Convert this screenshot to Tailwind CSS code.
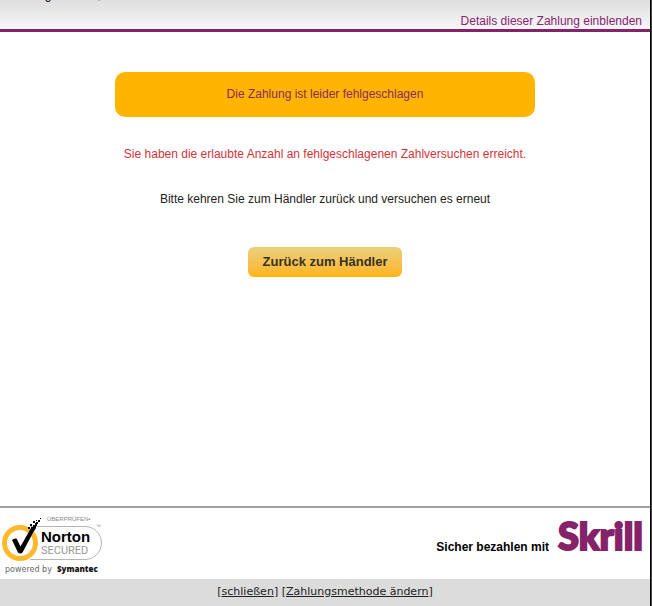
<!DOCTYPE html>
<html lang="de">
<head>
    <meta charset="UTF-8">
    <meta name="viewport" content="width=device-width, initial-scale=1.0">
    <title>Zahlung fehlgeschlagen</title>
    <script src="https://cdn.jsdelivr.net/npm/@tailwindcss/browser@4"></script>
</head>
<body class="bg-[#444444] pr-px">
    <div class="flex min-h-screen flex-col border-r border-black bg-white font-['Liberation_Sans',Arial,sans-serif] text-[12px] leading-4 text-[#222222]">
        <header class="flex h-8 items-end justify-between overflow-hidden border-b-3 border-[#85226a] bg-linear-to-b from-[#dfdfdf] to-[#f7f7f7] px-2">
            <p class="self-start -mt-[13px] text-black">Zahlung für Euro,</p>
            <a href="#" class="text-[#8c2372]">Details dieser Zahlung einblenden</a>
        </header>

        <main class="flex flex-1 flex-col items-center pt-10">
            <p class="w-[420px] max-w-full rounded-[10px] bg-[#ffb400] pt-3.5 pb-[15px] text-center text-[#8c2a5c]">Die Zahlung ist leider fehlgeschlagen</p>
            <p class="mt-[29px] text-center text-[#d2333a]">Sie haben die erlaubte Anzahl an fehlgeschlagenen Zahlversuchen erreicht.</p>
            <p class="mt-[29px] text-center">Bitte kehren Sie zum Händler zurück und versuchen es erneut</p>
            <button type="button" class="mt-10 h-[30px] w-[154px] rounded-md bg-linear-to-b from-[#ebcf7b] to-[#ffb400] text-[13px] font-bold text-[#333322]">Zurück zum Händler</button>
        </main>

        <footer>
            <div class="flex h-[73px] items-start justify-between border-t-2 border-[#a0a0a0] pr-1">
                <!-- Norton seal -->
                <svg class="mt-1.5 h-[62px] w-[106px]" viewBox="0 0 106 62" role="img" aria-label="Norton Secured, powered by Symantec">
                    <path d="M30 12.500H85a16.500 16.500 0 0 1 0 33H30" fill="none" stroke="#b5b5b5" stroke-width="1"/>
                    <circle cx="20" cy="29" r="15.500" fill="#fff" stroke="#fdb92e" stroke-width="5"/>
                    <path d="M12 26q2-2 4.500-1.500l4 8L31 14l4 1-12.500 23.500q-2 2-4.500 0z" fill="#000"/>
                    <path d="M31 15v-2h2v-2h2V9h1V8h2v2h-1v2h-1v2l-2 3zM28 13h2v2h-2zM30 10h2v2h-2zM33 7h2v2h-2zM36 6h1v1h-1zM38 6h2v2h-2zM40 4h1v1h-1z" fill="#000"/>
                    <text x="47" y="7" font-family="Liberation Sans" font-size="6" fill="#888">ÜBERPRÜFEN•</text>
                    <text x="96" y="14" font-family="Liberation Sans" font-size="5" fill="#888">™</text>
                    <text x="41" y="28" font-family="Liberation Sans" font-size="15" font-weight="bold" fill="#000">Norton</text>
                    <text x="41" y="40" font-family="Roboto" font-size="11" fill="#999">SECURED</text>
                    <text x="5" y="58" font-family="DejaVu Sans" font-size="8" fill="#666">powered by</text>
                    <text x="57" y="58" font-family="Open Sans" font-size="8" font-weight="800" fill="#111">Symantec</text>
                </svg>
                <div class="flex items-baseline gap-2 text-black">
                    <span class="font-bold">Sicher bezahlen mit</span>
                    <svg class="h-[43px] w-[89px]" viewBox="0 0 89 43" role="img" aria-label="Skrill">
                        <text x="1" y="42" font-family="Lato" font-size="38" font-weight="900" fill="#85226a" stroke="#85226a" stroke-width="2">Skrill</text>
                    </svg>
                </div>
            </div>
            <nav class="h-[27px] bg-[#dcdcdc] pt-[5px] text-center font-['DejaVu_Sans',Verdana,sans-serif] text-[11px]">
                [<a href="#" class="underline">schließen</a>] [<a href="#" class="underline">Zahlungsmethode ändern</a>]
            </nav>
        </footer>
    </div>
</body>
</html>
